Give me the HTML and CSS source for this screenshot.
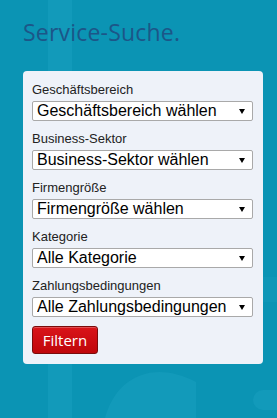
FILE: index.html
```html
<!DOCTYPE html>
<html>
	<head>
		<meta charset="utf-8" />
		<title>Service-Suche</title>
		<link rel="stylesheet" href="styles.css">
	</head>
	<body>
		<svg class="bg-deco" width="277" height="418" viewBox="0 0 277 418">
			<rect x="48" y="0" width="24" height="418" fill="#1aa0bf" opacity="0.5"/>
			<path d="M105 418 C115 380 150 358 196 382 L196 418 Z" fill="#1aa0bf" opacity="0.5"/>
			<rect x="253" y="390" width="40" height="20" rx="10" fill="#1aa0bf" opacity="0.5"/>
			<rect x="263" y="277" width="14" height="25" fill="#1aa0bf" opacity="0.3"/>
		</svg>
		<div class="page">
			<h1 class="title">Service-Suche.</h1>
			<form class="filter-box">
				<div class="field">
					<label>Geschäftsbereich</label>
					<div class="select-wrap">
						<select><option>Geschäftsbereich wählen</option></select>
					</div>
				</div>
				<div class="field">
					<label>Business-Sektor</label>
					<div class="select-wrap">
						<select><option>Business-Sektor wählen</option></select>
					</div>
				</div>
				<div class="field">
					<label>Firmengröße</label>
					<div class="select-wrap">
						<select><option>Firmengröße wählen</option></select>
					</div>
				</div>
				<div class="field">
					<label>Kategorie</label>
					<div class="select-wrap">
						<select><option>Alle Kategorie</option></select>
					</div>
				</div>
				<div class="field">
					<label>Zahlungsbedingungen</label>
					<div class="select-wrap">
						<select><option>Alle Zahlungsbedingungen</option></select>
					</div>
				</div>
				<button class="btn-filter" type="button">Filtern</button>
			</form>
		</div>
	</body>
</html>
```

FILE: styles.css
```css
body{margin: 0px;padding: 0px;background: #0b94b4;font-family: "Liberation Sans", Arial, sans-serif;overflow: hidden;}
.bg-deco{position: absolute;top: 0px;left: 0px;z-index: 0;}
.page{position: relative;z-index: 1;padding: 18px 14px 0px 23px;}
.title{
	margin: 0px 0px 25px 0px;
	font-family: "Open Sans", sans-serif;font-weight: normal;
	font-size: 23px;line-height: 28px;color: #1c5688;
	letter-spacing: 0.2px;
}
.filter-box{
	width: 240px;box-sizing: border-box;
	background: #eef2f9;border-radius: 4px;
	padding: 11px 10px 10px 9px;
}
.field{margin-bottom: 10px;}
.field:last-of-type{margin-bottom: 9px;}
.field label{
	display: block;font-size: 13px;line-height: 15px;color: #222;
	margin-bottom: 4px;
}
.select-wrap{position: relative;}
.select-wrap:after{
	content: "";position: absolute;right: 8px;top: 8px;
	border-left: 3px solid transparent;border-right: 3px solid transparent;
	border-top: 5px solid #000;
	pointer-events: none;
}
.select-wrap select{
	-webkit-appearance: none;appearance: none;
	width: 100%;height: 20px;margin: 0px;
	padding: 0px 0px 0px 4px;
	border: 1px solid #a9a9a9;border-radius: 2px;background: #fff;
	font-family: "Liberation Sans", Arial, sans-serif;font-size: 16px;line-height: 18px;color: #000;
	outline: none;
}
.btn-filter{
	display: block;width: 66px;height: 28px;margin: 0px;padding: 0px;
	border: 1px solid #7a0b0b;border-radius: 3px;
	background: linear-gradient(#d9141a, #c0060a);
	box-shadow: inset 0px 1px 0px rgba(255,255,255,0.25);
	font-family: "Open Sans", sans-serif;font-size: 15px;color: #fff;
}
```
